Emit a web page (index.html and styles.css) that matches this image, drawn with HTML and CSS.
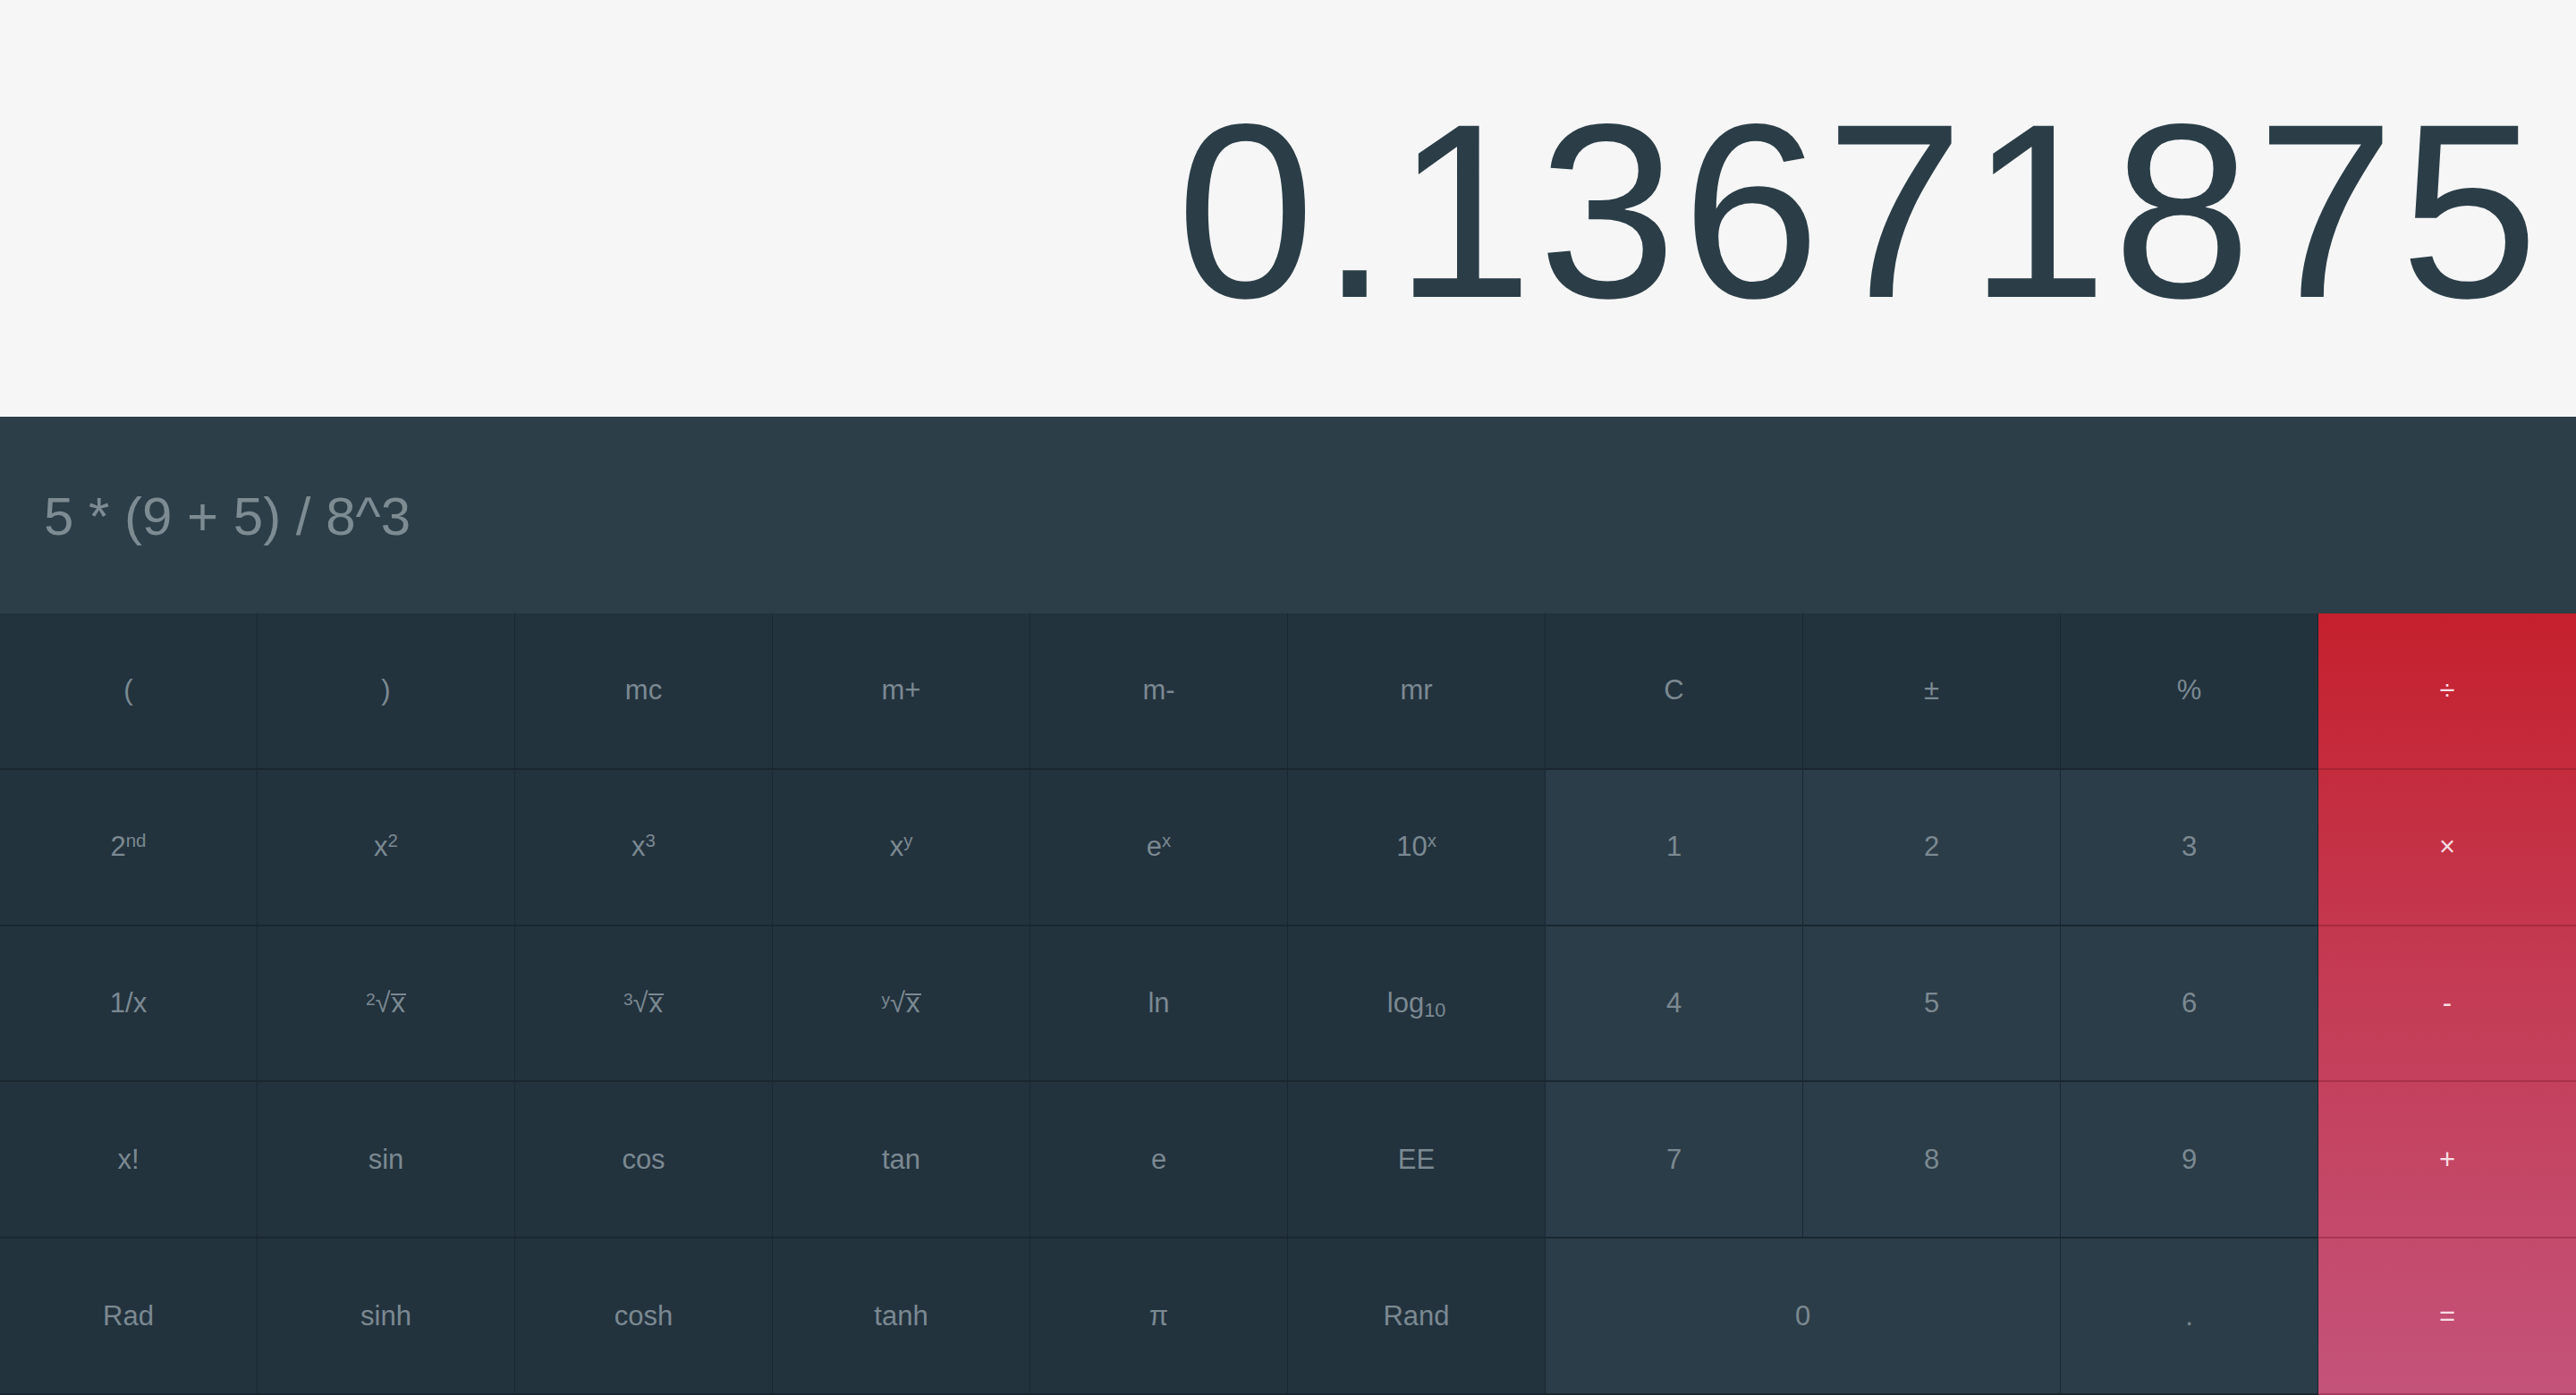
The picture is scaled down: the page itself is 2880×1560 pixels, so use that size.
FILE: index.html
```html
<!DOCTYPE html>
<html>
<head>
<meta charset="utf-8">
<title>Calculator</title>
<link rel="stylesheet" href="styles.css">
</head>
<body>
<div class="calc">
  <div class="display"><span class="result">0.13671875</span></div>
  <div class="expr">5 * (9 + 5) / 8^3</div>
  <div class="keys">
    <div class="key"><span>(</span></div>
    <div class="key"><span>)</span></div>
    <div class="key"><span>mc</span></div>
    <div class="key"><span>m+</span></div>
    <div class="key"><span>m-</span></div>
    <div class="key"><span>mr</span></div>
    <div class="key"><span>C</span></div>
    <div class="key"><span>±</span></div>
    <div class="key"><span>%</span></div>

    <div class="key"><span>2<sup>nd</sup></span></div>
    <div class="key"><span>x<sup>2</sup></span></div>
    <div class="key"><span>x<sup>3</sup></span></div>
    <div class="key"><span>x<sup>y</sup></span></div>
    <div class="key"><span>e<sup>x</sup></span></div>
    <div class="key"><span>10<sup>x</sup></span></div>
    <div class="key num"><span>1</span></div>
    <div class="key num"><span>2</span></div>
    <div class="key num"><span>3</span></div>

    <div class="key"><span>1/x</span></div>
    <div class="key"><span><sup class="idx">2</sup>√<span class="ov">x</span></span></div>
    <div class="key"><span><sup class="idx">3</sup>√<span class="ov">x</span></span></div>
    <div class="key"><span><sup class="idx">y</sup>√<span class="ov">x</span></span></div>
    <div class="key"><span>ln</span></div>
    <div class="key"><span>log<sub>10</sub></span></div>
    <div class="key num"><span>4</span></div>
    <div class="key num"><span>5</span></div>
    <div class="key num"><span>6</span></div>

    <div class="key"><span>x!</span></div>
    <div class="key"><span>sin</span></div>
    <div class="key"><span>cos</span></div>
    <div class="key"><span>tan</span></div>
    <div class="key"><span>e</span></div>
    <div class="key"><span>EE</span></div>
    <div class="key num"><span>7</span></div>
    <div class="key num"><span>8</span></div>
    <div class="key num"><span>9</span></div>

    <div class="key"><span>Rad</span></div>
    <div class="key"><span>sinh</span></div>
    <div class="key"><span>cosh</span></div>
    <div class="key"><span>tanh</span></div>
    <div class="key"><span>π</span></div>
    <div class="key"><span>Rand</span></div>
    <div class="key num zero"><span>0</span></div>
    <div class="key num"><span>.</span></div>

    <div class="ops">
      <div class="op"><span>÷</span></div>
      <div class="op"><span>×</span></div>
      <div class="op"><span>-</span></div>
      <div class="op"><span>+</span></div>
      <div class="op"><span>=</span></div>
    </div>
  </div>
</div>
</body>
</html>
```
FILE: styles.css
```css
* { box-sizing: border-box; }
html, body {
  margin: 0;
  padding: 0;
  height: 100%;
  overflow: hidden;
}
body {
  font-family: "Liberation Sans", Arial, sans-serif;
  background: #22333e;
}
.calc {
  height: 1560px;
  display: flex;
  flex-direction: column;
}
.display {
  height: 466px;
  flex: 0 0 466px;
  background: #f6f6f6;
  display: flex;
  align-items: center;
  justify-content: flex-end;
  padding: 6px 36px 0 0;
}
.result {
  font-size: 278px;
  line-height: 1;
  color: #2b3e48;
  letter-spacing: 6px;
}
.expr {
  flex: 0 0 220px;
  background: #2c3e48;
  color: #7d8b92;
  font-size: 60px;
  display: flex;
  align-items: center;
  padding-left: 49px;
  padding-top: 2px;
}
.keys {
  flex: 1 1 auto;
  display: grid;
  grid-template-columns: repeat(10, 1fr);
  grid-template-rows: repeat(5, 1fr);
  background: #22333e;
}
.key {
  display: flex;
  align-items: center;
  justify-content: center;
  background: #22333e;
  color: #7b8991;
  font-size: 31px;
  border-right: 1px solid #1a272f;
  border-bottom: 2px solid #1a272f;
  white-space: nowrap;
}
.key.num {
  background: #2b3d48;
}
.key.zero {
  grid-column: span 2;
}
sup {
  font-size: 0.66em;
  line-height: 0;
  vertical-align: 0.5em;
}
sup.idx {
  font-size: 0.62em;
  vertical-align: 0.4em;
}
sub {
  font-size: 0.7em;
  line-height: 0;
  vertical-align: -0.25em;
}
.ov {
  display: inline-block;
  line-height: 0.55;
  border-top: 2px solid currentColor;
  padding: 0 1px;
}
.ops {
  grid-column: 10;
  grid-row: 1 / span 5;
  display: flex;
  flex-direction: column;
  background: linear-gradient(180deg, #c5202d 0%, #c43a52 45%, #c4537a 100%);
}
.op {
  flex: 1 1 0;
  display: flex;
  align-items: center;
  justify-content: center;
  color: #f6dde3;
  font-size: 31px;
  border-bottom: 2px solid rgba(120, 20, 40, 0.35);
}
```
